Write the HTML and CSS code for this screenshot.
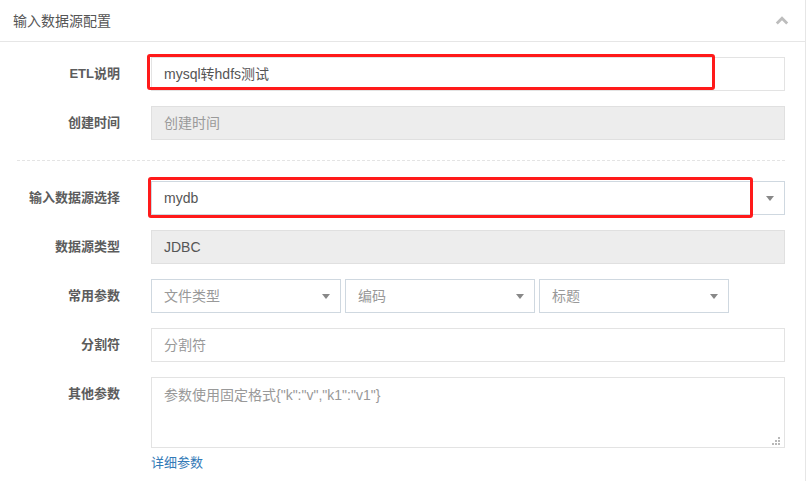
FILE: index.html
```html
<!DOCTYPE html>
<html lang="zh">
<head>
<meta charset="utf-8">
<title>输入数据源配置</title>
<link rel="stylesheet" href="styles.css">
</head>
<body>
<div class="panel">
  <div class="panel-head">
    <span class="panel-title">输入数据源配置</span>
    <svg class="chevron" width="14" height="9" viewBox="0 0 14 9"><polyline points="1.8,7.5 7,2.3 12.2,7.5" fill="none" stroke="#bdbdbd" stroke-width="2.8"/></svg>
  </div>
  <div class="form">
    <div class="row">
      <div class="label">ETL说明</div>
      <div class="field">
        <div class="control">mysql转hdfs测试</div>
        <div class="mark mark-etl"></div>
      </div>
    </div>
    <div class="row">
      <div class="label">创建时间</div>
      <div class="field">
        <div class="control disabled placeholder">创建时间</div>
      </div>
    </div>
    <div class="divider"></div>
    <div class="row">
      <div class="label">输入数据源选择</div>
      <div class="field">
        <div class="control select">mydb<span class="caret"></span></div>
        <div class="mark mark-db"></div>
      </div>
    </div>
    <div class="row">
      <div class="label">数据源类型</div>
      <div class="field">
        <div class="control disabled">JDBC</div>
      </div>
    </div>
    <div class="row">
      <div class="label">常用参数</div>
      <div class="field selects">
        <div class="control select small placeholder">文件类型<span class="caret"></span></div>
        <div class="control select small placeholder">编码<span class="caret"></span></div>
        <div class="control select small placeholder">标题<span class="caret"></span></div>
      </div>
    </div>
    <div class="row">
      <div class="label">分割符</div>
      <div class="field">
        <div class="control placeholder">分割符</div>
      </div>
    </div>
    <div class="row">
      <div class="label">其他参数</div>
      <div class="field">
        <div class="control textarea placeholder">参数使用固定格式{"k":"v","k1":"v1"}
          <svg class="grip" width="9" height="9" viewBox="0 0 9 9"><g fill="#b8b8b8"><rect x="6" y="0" width="2" height="2"/><rect x="3" y="3" width="2" height="2"/><rect x="6" y="3" width="2" height="2"/><rect x="0" y="6" width="2" height="2"/><rect x="3" y="6" width="2" height="2"/><rect x="6" y="6" width="2" height="2"/></g></svg>
        </div>
        <a class="more" href="#">详细参数</a>
      </div>
    </div>
  </div>
</div>
</body>
</html>
```
FILE: styles.css
```css
html, body {
  margin: 0;
  padding: 0;
  background: #fff;
}
body {
  font-family: "Liberation Sans", "Noto Sans CJK SC", sans-serif;
  color: #555;
}
.panel {
  width: 806px;
  height: 481px;
  box-sizing: border-box;
  border-right: 1px solid #e6e6e6;
}
.panel-head {
  height: 39px;
  box-sizing: content-box;
  border-bottom: 1px solid #e6e6e6;
  display: flex;
  align-items: center;
  justify-content: space-between;
  padding: 0 16px 2px 13px;
  font-size: 14px;
  color: #555;
}
.chevron {
  display: block;
  margin-top: 2px;
}
.form {
  padding-top: 15px;
}
.row {
  display: flex;
  align-items: flex-start;
  margin-bottom: 15px;
}
.label {
  width: 120px;
  margin-right: 31px;
  text-align: right;
  font-size: 13px;
  font-weight: bold;
  color: #5c5c5c;
  line-height: 34px;
}
.field {
  position: relative;
  width: 634px;
}
.control {
  position: relative;
  height: 34px;
  box-sizing: border-box;
  border: 1px solid #e3e3e3;
  padding: 0 12px;
  font-size: 14px;
  line-height: 32px;
  color: #555;
  background: #fff;
}
.placeholder {
  color: #999;
}
.disabled {
  background: #ededed;
  border-color: #e0e0e0;
}
.disabled.placeholder {
  color: #9a9a9a;
}
.select {
  border-color: #cfd8e0;
}
.caret {
  position: absolute;
  right: 10px;
  top: 14px;
  width: 0;
  height: 0;
  border-left: 4px solid transparent;
  border-right: 4px solid transparent;
  border-top: 5px solid #888;
}
.selects {
  display: flex;
  gap: 4px;
}
.small {
  width: 190px;
}
.divider {
  margin: 20px 20px 20px 17px;
  border-top: 1px dashed #e4e4e4;
}
.textarea {
  height: 71px;
  line-height: 20px;
  padding-top: 7px;
}
.grip {
  position: absolute;
  right: 3px;
  bottom: 1px;
}
.more {
  display: inline-block;
  margin-top: 5px;
  font-size: 13px;
  line-height: 20px;
  color: #337ab7;
  text-decoration: none;
}
.mark {
  position: absolute;
  box-sizing: border-box;
  border: 3px solid #ff1a1a;
  border-radius: 3px;
}
.mark-etl {
  left: -4px;
  top: -3px;
  width: 568px;
  height: 36px;
}
.mark-db {
  left: -3px;
  top: -4px;
  width: 605px;
  height: 41px;
}
```
